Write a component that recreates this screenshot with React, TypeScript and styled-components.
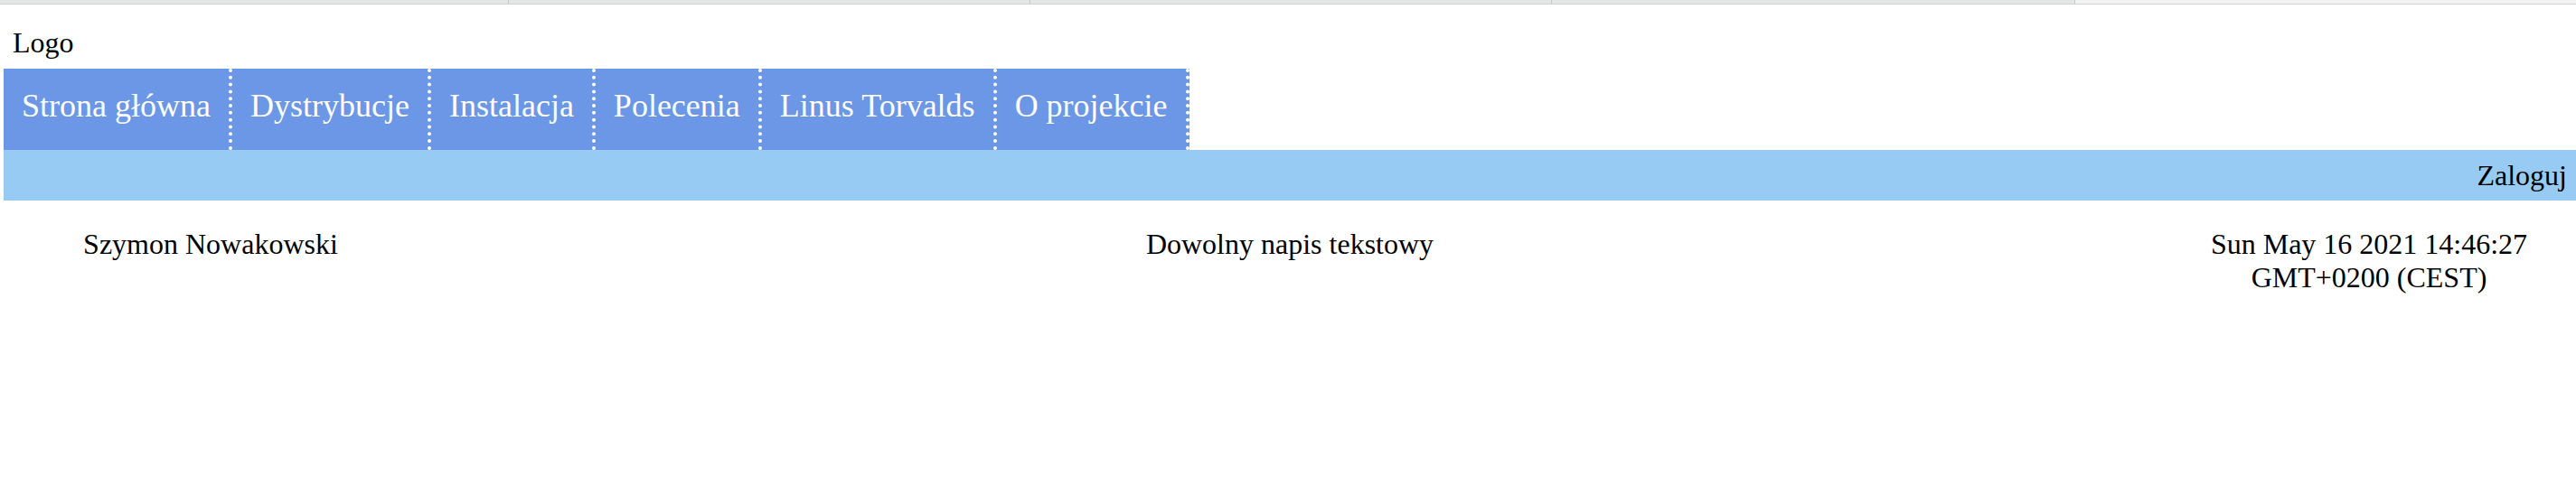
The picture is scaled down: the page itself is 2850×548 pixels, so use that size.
import React from 'react';
import styled, { createGlobalStyle } from 'styled-components';

const GlobalStyle = createGlobalStyle`
  html, body {
    margin: 0;
    padding: 0;
    background: #ffffff;
    font-family: 'Liberation Serif', 'Times New Roman', serif;
    color: #000000;
  }
`;

const TabStrip = styled.div`
  display: flex;
  height: 4px;
  border-bottom: 1px solid #cfd1d0;
  background: #e4e6e5;
`;

const TabSegment = styled.div<{ $active?: boolean; $width?: number }>`
  flex: ${(p) => (p.$width ? `0 0 ${p.$width}px` : '1 1 auto')};
  background: ${(p) => (p.$active ? '#f1f2f1' : '#e4e6e5')};
  border-right: ${(p) => (p.$active ? 'none' : '1px solid #c6c8c7')};
`;

const Page = styled.div`
  padding-left: 4px;
`;

const LogoBox = styled.div`
  padding: 24px 10px 10px;
  font-size: 32px;
  line-height: 37px;
`;

const Nav = styled.nav`
  display: flex;
  width: fit-content;
  background: #6b97e6;
`;

const NavItem = styled.a`
  display: block;
  padding: 21px 20px 28px;
  font-size: 36px;
  line-height: 41px;
  color: #ffffff;
  text-decoration: none;
  border-right: 4px dotted #ffffff;
  white-space: nowrap;
`;

const UserBar = styled.div`
  display: flex;
  justify-content: flex-end;
  background: #97cbf4;
  padding: 10px 10px 9px;
  font-size: 32px;
  line-height: 37px;
`;

const Footer = styled.footer`
  display: flex;
  justify-content: space-between;
  padding-top: 30px;
  font-size: 32px;
  line-height: 37px;
`;

const FooterCell = styled.div`
  width: 458px;
  text-align: center;
`;

const tabs = [562, 576, 576, 578];
const links = ['Strona główna', 'Dystrybucje', 'Instalacja', 'Polecenia', 'Linus Torvalds', 'O projekcie'];

export default function App() {
  return (
    <>
      <GlobalStyle />
      <TabStrip>
        {tabs.map((w, i) => (
          <TabSegment key={i} $width={w} />
        ))}
        <TabSegment $active />
      </TabStrip>
      <Page>
        <LogoBox>Logo</LogoBox>
        <Nav>
          {links.map((label) => (
            <NavItem key={label} href="#">
              {label}
            </NavItem>
          ))}
        </Nav>
        <UserBar>Zaloguj</UserBar>
        <Footer>
          <FooterCell>Szymon Nowakowski</FooterCell>
          <FooterCell>Dowolny napis tekstowy</FooterCell>
          <FooterCell>Sun May 16 2021 14:46:27 GMT+0200 (CEST)</FooterCell>
        </Footer>
      </Page>
    </>
  );
}
